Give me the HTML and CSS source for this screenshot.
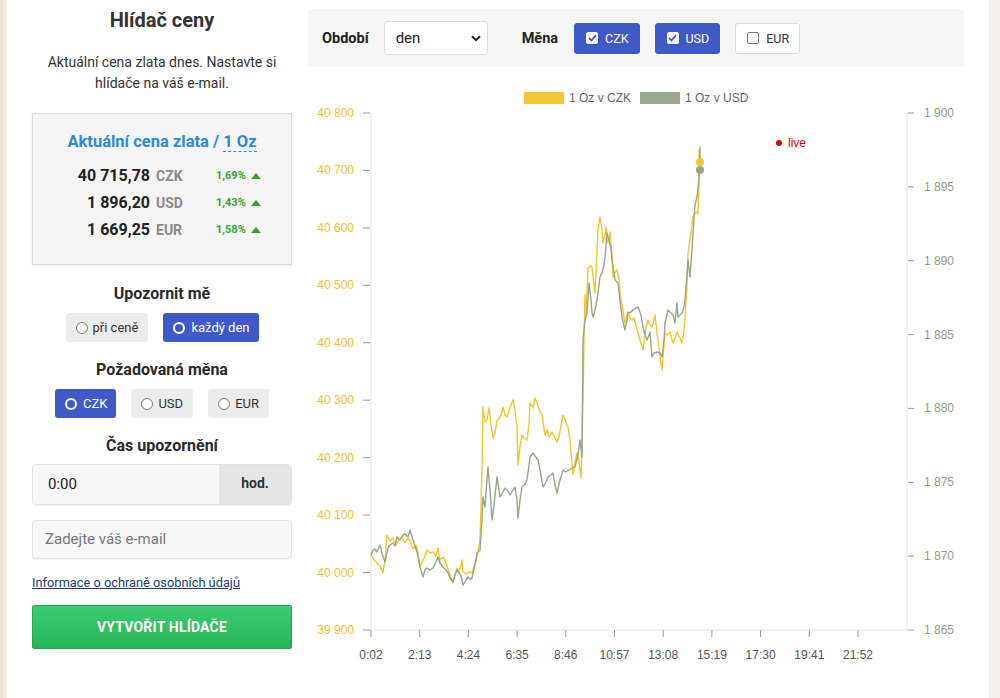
FILE: index.html
```html
<!DOCTYPE html>
<html lang="cs">
<head>
<meta charset="utf-8">
<title>Hlídač ceny</title>
<link rel="stylesheet" href="styles.css">
</head>
<body>
<div class="page">
  <aside class="sidebar">
    <h1 class="title">Hlídač ceny</h1>
    <p class="intro">Aktuální cena zlata dnes. Nastavte si hlídače na váš e-mail.</p>

    <div class="price-box">
      <h2 class="price-title">Aktuální cena zlata / <span class="unit">1 Oz</span></h2>
      <div class="price-grid">
        <span class="amount">40 715,78</span><span class="cur">CZK</span><span class="pct">1,69%</span><span class="up"></span>
        <span class="amount">1 896,20</span><span class="cur">USD</span><span class="pct">1,43%</span><span class="up"></span>
        <span class="amount">1 669,25</span><span class="cur">EUR</span><span class="pct">1,58%</span><span class="up"></span>
      </div>
    </div>

    <h3 class="label">Upozornit mě</h3>
    <div class="options">
      <span class="opt"><span class="radio"></span>při ceně</span>
      <span class="opt active"><span class="radio"></span>každý den</span>
    </div>

    <h3 class="label">Požadovaná měna</h3>
    <div class="options wide-gap">
      <span class="opt active"><span class="radio"></span>CZK</span>
      <span class="opt"><span class="radio"></span>USD</span>
      <span class="opt"><span class="radio"></span>EUR</span>
    </div>

    <h3 class="label">Čas upozornění</h3>
    <div class="input-group">
      <span class="time-value">0:00</span>
      <span class="addon">hod.</span>
    </div>

    <div class="email">Zadejte váš e-mail</div>

    <a class="privacy" href="#">Informace o ochraně osobních údajů</a>

    <div class="submit">VYTVOŘIT HLÍDAČE</div>
  </aside>

  <main class="chart-panel">
    <div class="toolbar">
      <span class="tb-label">Období</span>
      <div class="select">
        <span>den</span>
        <svg width="10" height="7" viewBox="0 0 10 7"><path d="M1 1.2 L5 5.2 L9 1.2" fill="none" stroke="#222" stroke-width="2"/></svg>
      </div>
      <span class="tb-label mena">Měna</span>
      <span class="chk on"><span class="box"><svg width="9" height="8" viewBox="0 0 9 8"><path d="M1 4 L3.5 6.5 L8 1.2" fill="none" stroke="#4059c9" stroke-width="1.8"/></svg></span>CZK</span>
      <span class="chk on"><span class="box"><svg width="9" height="8" viewBox="0 0 9 8"><path d="M1 4 L3.5 6.5 L8 1.2" fill="none" stroke="#4059c9" stroke-width="1.8"/></svg></span>USD</span>
      <span class="chk"><span class="box"></span>EUR</span>
    </div>

    <svg class="chart" width="656" height="600" viewBox="308 75 656 600">
      <!-- legend -->
      <rect x="524" y="92" width="40" height="12" fill="#f2ca35"/>
      <text class="legend" x="569" y="102">1 Oz v CZK</text>
      <rect x="640" y="92" width="40" height="12" fill="#9aa98b"/>
      <text class="legend" x="685" y="102">1 Oz v USD</text>

      <!-- axes -->
      <line x1="371" y1="113" x2="371" y2="630" stroke="#e3e3e3" stroke-width="1"/>
      <line x1="907" y1="113" x2="907" y2="630" stroke="#e3e3e3" stroke-width="1"/>
      <line x1="371" y1="630" x2="907" y2="630" stroke="#e3e3e3" stroke-width="1"/>

      <g stroke="#999" stroke-width="1">
        <line x1="363" y1="113" x2="370" y2="113"/>
        <line x1="363" y1="170.4" x2="370" y2="170.4"/>
        <line x1="363" y1="227.9" x2="370" y2="227.9"/>
        <line x1="363" y1="285.3" x2="370" y2="285.3"/>
        <line x1="363" y1="342.8" x2="370" y2="342.8"/>
        <line x1="363" y1="400.2" x2="370" y2="400.2"/>
        <line x1="363" y1="457.7" x2="370" y2="457.7"/>
        <line x1="363" y1="515.1" x2="370" y2="515.1"/>
        <line x1="363" y1="572.6" x2="370" y2="572.6"/>
        <line x1="363" y1="630" x2="370" y2="630"/>

        <line x1="908" y1="113" x2="914" y2="113"/>
        <line x1="908" y1="186.9" x2="914" y2="186.9"/>
        <line x1="908" y1="260.7" x2="914" y2="260.7"/>
        <line x1="908" y1="334.6" x2="914" y2="334.6"/>
        <line x1="908" y1="408.4" x2="914" y2="408.4"/>
        <line x1="908" y1="482.3" x2="914" y2="482.3"/>
        <line x1="908" y1="556.1" x2="914" y2="556.1"/>
        <line x1="908" y1="630" x2="914" y2="630"/>

        <line x1="371" y1="630" x2="371" y2="637"/>
        <line x1="419.7" y1="630" x2="419.7" y2="637"/>
        <line x1="468.4" y1="630" x2="468.4" y2="637"/>
        <line x1="517.1" y1="630" x2="517.1" y2="637"/>
        <line x1="565.8" y1="630" x2="565.8" y2="637"/>
        <line x1="614.5" y1="630" x2="614.5" y2="637"/>
        <line x1="663.2" y1="630" x2="663.2" y2="637"/>
        <line x1="711.9" y1="630" x2="711.9" y2="637"/>
        <line x1="760.6" y1="630" x2="760.6" y2="637"/>
        <line x1="809.3" y1="630" x2="809.3" y2="637"/>
        <line x1="858" y1="630" x2="858" y2="637"/>
      </g>

      <g class="ylab-left">
        <text x="354" y="117">40 800</text>
        <text x="354" y="174.4">40 700</text>
        <text x="354" y="231.9">40 600</text>
        <text x="354" y="289.3">40 500</text>
        <text x="354" y="346.8">40 400</text>
        <text x="354" y="404.2">40 300</text>
        <text x="354" y="461.7">40 200</text>
        <text x="354" y="519.1">40 100</text>
        <text x="354" y="576.6">40 000</text>
        <text x="354" y="634">39 900</text>
      </g>
      <g class="ylab-right">
        <text x="924" y="117">1 900</text>
        <text x="924" y="190.9">1 895</text>
        <text x="924" y="264.7">1 890</text>
        <text x="924" y="338.6">1 885</text>
        <text x="924" y="412.4">1 880</text>
        <text x="924" y="486.3">1 875</text>
        <text x="924" y="560.1">1 870</text>
        <text x="924" y="634">1 865</text>
      </g>
      <g class="xlab">
        <text x="371" y="659">0:02</text>
        <text x="419.7" y="659">2:13</text>
        <text x="468.4" y="659">4:24</text>
        <text x="517.1" y="659">6:35</text>
        <text x="565.8" y="659">8:46</text>
        <text x="614.5" y="659">10:57</text>
        <text x="663.2" y="659">13:08</text>
        <text x="711.9" y="659">15:19</text>
        <text x="760.6" y="659">17:30</text>
        <text x="809.3" y="659">19:41</text>
        <text x="858" y="659">21:52</text>
      </g>

      <!-- series -->
      <polyline fill="none" stroke="#f3c729" stroke-width="1.4" stroke-linejoin="round" points="371,555 374,560 377,563 380,566 383,573 385,560 387,535 390,541 393,538 396,545 399,540 402,537 405,543 408,538 410,541 413,549 416,545 418,553 420,567 423,560 425,556 427,550 430,553 433,552 436,556 438,548 440,560 443,557 446,563 449,572 451,578 453,583 455,575 457,568 459,571 461,566 462,560 463,572 466,574 469,572 472,573 475,563 478,553 480,540 482,470 483,407 485,422 487,420 489,408 491,425 493,438 495,433 497,421 500,417 502,412 503,407 505,415 507,417 509,411 511,405 513,400 515,410 517,427 518,465 520,447 522,435 524,438 527,440 529,425 530,403 533,408 535,398 537,403 540,412 542,414 545,435 547,430 549,437 552,432 554,436 557,442 559,437 561,425 563,415 565,420 568,427 570,440 573,475 575,463 577,453 579,462 581,478 583,400 584,340 585,295 586,315 588,268 590,266 592,267 594,285 595,293 597,250 598,230 600,217 602,230 603,243 605,235 606,227 608,243 609,240 610,232 612,255 613,277 615,272 617,270 619,280 620,293 622,305 625,323 627,315 628,312 630,318 632,320 634,318 636,325 638,333 640,340 643,350 645,335 646,328 648,320 650,325 652,327 654,320 655,315 657,333 659,348 662,370 664,345 665,333 667,335 670,332 672,340 673,343 675,338 677,332 680,338 682,343 684,330 685,317 687,285 688,253 690,240 692,225 693,217 695,213 697,212 698,214 699,185 699,150 700,162"/>
      <polyline fill="none" stroke="#97a68a" stroke-width="1.4" stroke-linejoin="round" points="371,555 373,550 375,549 377,552 380,545 382,553 385,562 388,548 390,545 393,543 395,546 397,537 400,540 403,535 405,534 408,537 410,530 413,540 415,546 417,552 420,567 423,577 425,570 427,568 430,570 433,568 436,562 438,557 440,563 443,567 446,570 448,573 450,578 453,582 455,575 457,570 459,573 461,576 463,585 466,580 468,577 470,579 472,578 475,565 477,553 480,550 482,520 483,497 485,507 487,480 488,467 490,490 492,520 494,505 497,477 499,490 500,497 503,492 505,488 508,491 510,495 513,490 515,487 517,500 518,518 520,500 522,487 525,484 527,480 529,465 530,457 533,453 535,456 538,460 540,470 543,487 546,482 548,477 551,475 553,473 555,485 557,493 560,480 563,470 566,472 569,470 572,468 575,467 578,455 580,440 582,457 583,340 585,320 587,313 589,283 591,300 592,313 593,317 595,310 597,300 599,285 600,277 602,273 604,265 605,257 607,233 609,240 611,250 612,260 614,272 615,280 617,282 618,283 620,300 622,317 625,330 627,320 628,313 631,312 633,310 636,308 638,307 641,315 643,327 645,335 647,340 649,335 650,332 652,357 654,353 657,352 660,353 662,357 664,340 665,323 667,315 668,310 671,313 673,315 675,323 677,303 678,317 680,315 682,313 684,307 685,300 687,275 688,260 690,277 692,250 693,233 695,205 697,197 698,188 699,177 700,147 700,170"/>
      <circle cx="700" cy="170" r="4" fill="#97a68a"/>
      <circle cx="700" cy="162" r="4" fill="#f3c729"/>

      <!-- live -->
      <circle cx="779" cy="143" r="3" fill="#e00000"/>
      <text class="live" x="788" y="147">live</text>
    </svg>
  </main>
</div>
</body>
</html>
```

FILE: styles.css
```css
* { box-sizing: border-box; }

html, body {
  margin: 0;
  padding: 0;
}

body {
  background: linear-gradient(90deg, #ebe3da 0, #f4efe9 7px, #f4efe9 100%);
  font-family: Roboto, "Noto Sans", "Liberation Sans", sans-serif;
  color: #333;
  width: 1000px;
  height: 698px;
  overflow: hidden;
}

.page {
  margin-left: 7px;
  width: 982px;
  height: 698px;
  background: #fff;
  display: flex;
  gap: 16px;
  padding: 0 25px;
}

/* ---------- sidebar ---------- */
.sidebar {
  width: 260px;
  flex: none;
  display: flex;
  flex-direction: column;
  align-items: stretch;
  text-align: center;
}

.title {
  margin: 8px 0 0;
  font-size: 20px;
  line-height: 24px;
  font-weight: 700;
  color: #333;
}

.intro {
  margin: 20px 0 0;
  font-size: 14px;
  line-height: 21px;
  color: #333;
}

.price-box {
  margin-top: 19px;
  height: 152px;
  background: #f5f5f5;
  border: 1px solid #dadada;
  box-shadow: 0 1px 2px rgba(0, 0, 0, 0.08);
  padding: 18px 0 0 0;
}

.price-title {
  margin: 0;
  font-size: 16.5px;
  line-height: 20px;
  font-weight: 700;
  color: #2a8bd8;
}

.unit {
  border-bottom: 1px dashed #2a8bd8;
}

.price-grid {
  margin-top: 10px;
  display: grid;
  grid-template-columns: 117px 66px 34px 20px;
  grid-auto-rows: 27px;
  align-items: center;
  text-align: left;
}

.amount {
  text-align: right;
  font-size: 16px;
  font-weight: 700;
  color: #222;
}

.cur {
  padding-left: 6px;
  font-size: 14px;
  font-weight: 700;
  color: #8a8a8a;
}

.pct {
  font-size: 11px;
  font-weight: 700;
  color: #36a62a;
}

.up {
  justify-self: start;
  margin-left: 1px;
  width: 0;
  height: 0;
  border-left: 5px solid transparent;
  border-right: 5px solid transparent;
  border-bottom: 6px solid #36a62a;
}

.label {
  margin: 19px 0 0;
  font-size: 16px;
  line-height: 20px;
  font-weight: 700;
  color: #2a2a2a;
}

.label + .options { margin-top: 9px; }
.options + .label { margin-top: 18px; }

.options {
  display: flex;
  justify-content: center;
  gap: 15px;
}

.opt {
  display: inline-flex;
  align-items: center;
  gap: 5px;
  height: 29px;
  padding: 0 10px;
  background: #ececec;
  border-radius: 3px;
  font-size: 13px;
  color: #333;
}

.opt .radio {
  width: 12px;
  height: 12px;
  border-radius: 50%;
  border: 1px solid #777;
  background: #fff;
}

.opt.active {
  background: #4059c9;
  color: #fff;
  padding-right: 9px;
}

.opt.active .radio {
  border: 2px solid #fff;
  background: #4059c9;
  margin-right: 1px;
}

.input-group {
  margin-top: 8px;
  height: 41px;
  display: flex;
  border: 1px solid #e2e2e2;
  border-radius: 4px;
  overflow: hidden;
  box-shadow: 0 1px 1px rgba(0, 0, 0, 0.05);
}

.time-value {
  flex: 1;
  background: #f8f8f8;
  text-align: left;
  padding-left: 15px;
  font-size: 15px;
  line-height: 39px;
  color: #222;
}

.addon {
  width: 72px;
  background: #e6e6e6;
  font-size: 14px;
  font-weight: 700;
  line-height: 36px;
  color: #333;
}

.email {
  margin-top: 15px;
  height: 39px;
  border: 1px solid #e2e2e2;
  border-radius: 4px;
  background: #f8f8f8;
  text-align: left;
  padding-left: 12px;
  font-size: 15px;
  line-height: 37px;
  color: #777;
  box-shadow: 0 1px 1px rgba(0, 0, 0, 0.05);
}

.privacy {
  margin-top: 15px;
  align-self: flex-start;
  font-size: 12.8px;
  line-height: 18px;
  color: #1d3c74;
  text-decoration: underline;
}

.submit {
  margin-top: 13px;
  height: 44px;
  background: linear-gradient(180deg, #3ccb70 0%, #28b559 100%);
  border: 1px solid #24a652;
  border-radius: 2px;
  color: #fff;
  font-size: 14px;
  font-weight: 700;
  line-height: 42px;
  letter-spacing: 0.2px;
}

/* ---------- chart panel ---------- */
.chart-panel {
  width: 656px;
  flex: none;
}

.toolbar {
  margin-top: 9px;
  height: 58px;
  background: #f6f6f6;
  display: flex;
  align-items: center;
  padding-left: 14px;
}

.tb-label {
  font-size: 14.5px;
  font-weight: 700;
  color: #222;
}

.select {
  margin-left: 15px;
  width: 104px;
  height: 34px;
  background: #fff;
  border: 1px solid #dcdcdc;
  border-radius: 4px;
  display: flex;
  align-items: center;
  justify-content: space-between;
  padding: 0 6px 0 11px;
  font-size: 15px;
  color: #222;
}

.tb-label.mena {
  margin-left: 34px;
  margin-right: 16px;
}

.chk {
  display: inline-flex;
  align-items: center;
  gap: 7px;
  height: 31px;
  padding: 0 10px 0 11px;
  margin-right: 15px;
  border-radius: 3px;
  font-size: 12.5px;
  background: #fff;
  border: 1px solid #dcdcdc;
  color: #333;
}

.chk .box {
  width: 12px;
  height: 12px;
  border: 1px solid #777;
  border-radius: 2px;
  background: #fff;
  display: flex;
  align-items: center;
  justify-content: center;
}

.chk.on {
  background: #4059c9;
  border-color: #4059c9;
  color: #fff;
}

.chk.on .box {
  border-color: #fff;
}

.chart {
  display: block;
  margin-top: 8px;
  font-family: "Liberation Sans", Arial, sans-serif;
}

.legend {
  font-size: 12px;
  fill: #666;
}

.ylab-left text {
  font-size: 12px;
  fill: #f2c22a;
  text-anchor: end;
}

.ylab-right text {
  font-size: 12px;
  fill: #8fa07f;
}

.xlab text {
  font-size: 12px;
  fill: #555;
  text-anchor: middle;
}

.live {
  font-size: 12px;
  fill: #e00000;
}
```
